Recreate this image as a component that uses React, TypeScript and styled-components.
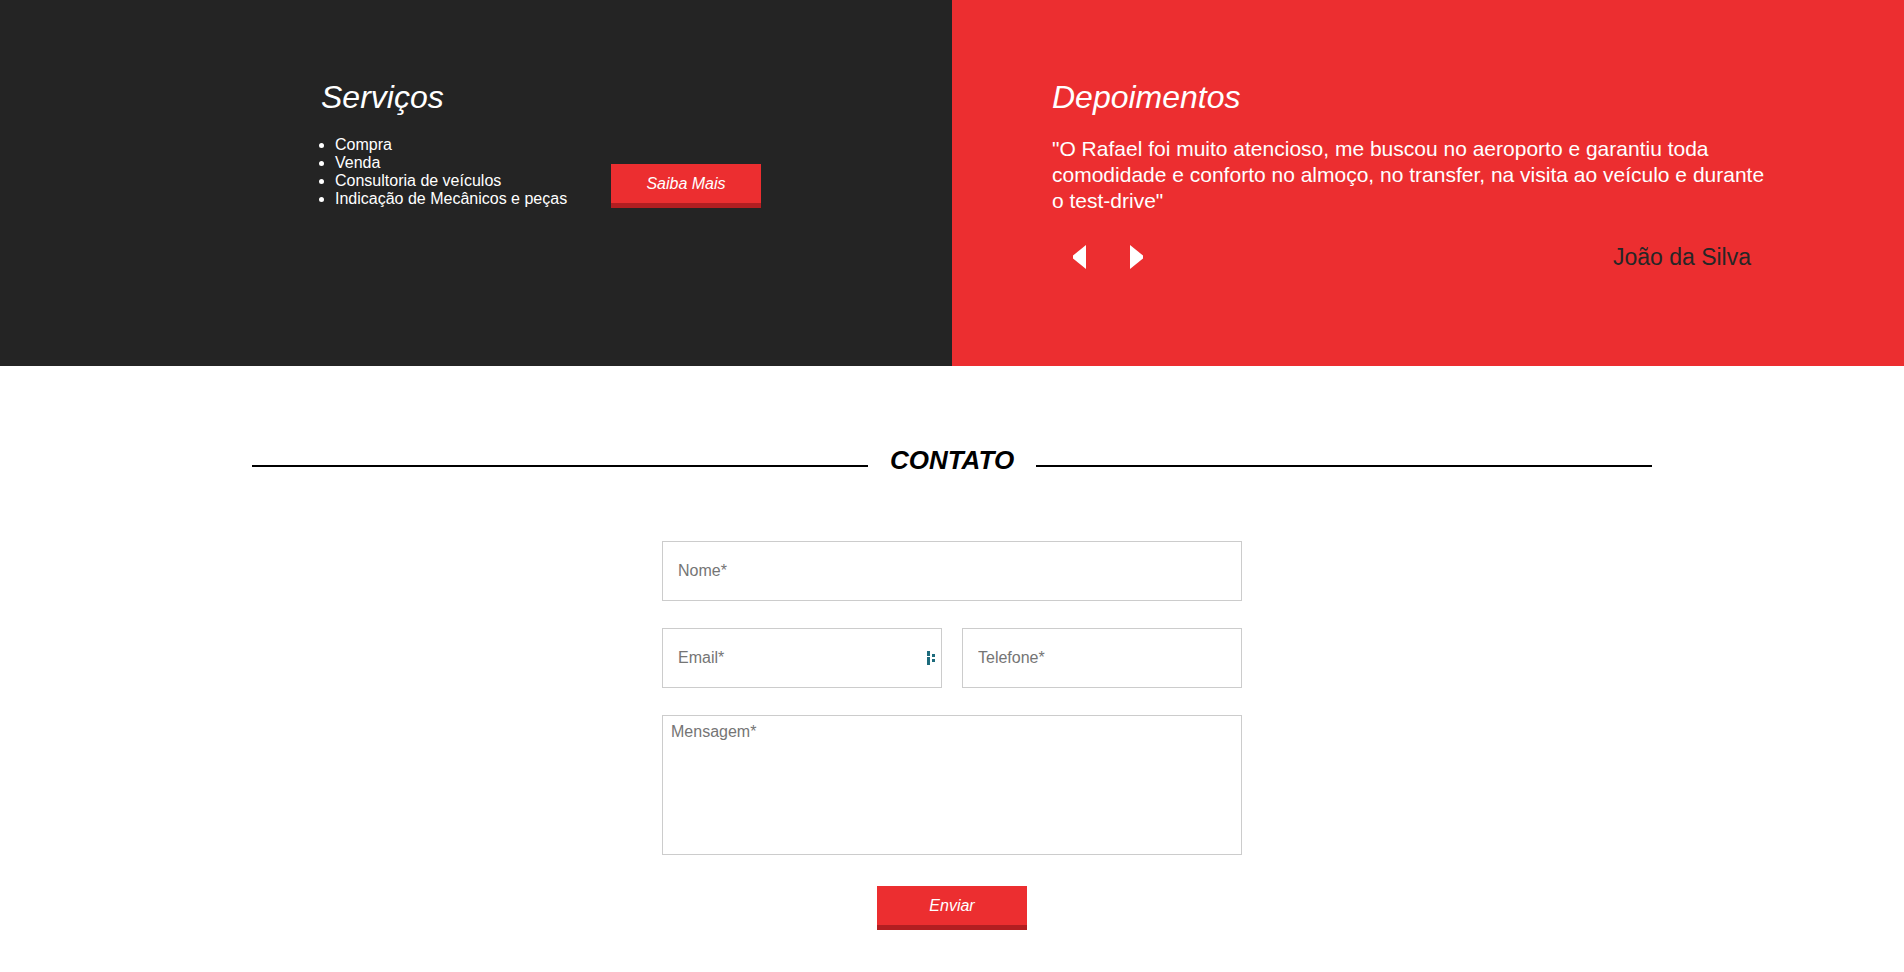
import styled, { createGlobalStyle } from 'styled-components';

const GlobalStyle = createGlobalStyle`
  * {
    box-sizing: border-box;
  }

  body {
    margin: 0;
    background: #ffffff;
    font-family: "Liberation Sans", Arial, sans-serif;
  }
`;

const RED = '#ec2e30';
const RED_DARK = '#b21e21';

const TopSection = styled.section`
  display: grid;
  grid-template-columns: 1fr 1fr;
  height: 366px;
`;

const ServicesColumn = styled.div`
  background: #242424;
  padding: 79px 0 0 321px;
`;

const TestimonialsColumn = styled.div`
  background: ${RED};
  padding: 79px 100px 0 100px;
`;

const SectionTitle = styled.h2`
  margin: 0;
  color: #ffffff;
  font-size: 32px;
  font-style: italic;
  font-weight: normal;
  line-height: 37px;
`;

const ServicesRow = styled.div`
  display: flex;
  align-items: flex-end;
  margin-top: 20px;
`;

const ServiceList = styled.ul`
  flex: none;
  width: 290px;
  margin: 0;
  padding-left: 14px;
  color: #ffffff;
  font-size: 16px;
  line-height: 18px;
  list-style: disc;
`;

const RedButton = styled.button`
  width: 150px;
  height: 44px;
  border: none;
  border-bottom: 5px solid ${RED_DARK};
  background: ${RED};
  color: #ffffff;
  font-family: "Liberation Sans", Arial, sans-serif;
  font-size: 16px;
  font-style: italic;
  cursor: pointer;
  padding: 0;
`;

const Quote = styled.p`
  max-width: 725px;
  margin: 20px 0 0;
  color: #ffffff;
  font-size: 21px;
  line-height: 26px;
`;

const TestimonialFooter = styled.div`
  display: flex;
  align-items: flex-start;
  margin-top: 31px;
  padding: 0 53px 0 20px;
`;

const Arrows = styled.div`
  display: flex;
  gap: 44px;
`;

const ArrowButton = styled.button`
  display: block;
  width: 14px;
  height: 24px;
  padding: 0;
  border: none;
  background: none;
  cursor: pointer;

  svg {
    display: block;
  }
`;

const Author = styled.span`
  margin-left: auto;
  color: #262626;
  font-size: 23px;
  line-height: 25px;
`;

const ContactSection = styled.section`
  padding: 79px 0 60px;
`;

const ContactTitleRow = styled.div`
  display: flex;
  align-items: center;
  gap: 22px;
  width: 1400px;
  margin: 0 auto;
`;

const TitleLine = styled.span`
  flex: 1;
  height: 2px;
  margin-top: 12px;
  background: #000000;
`;

const ContactTitle = styled.h2`
  margin: 0;
  color: #000000;
  font-size: 26px;
  font-style: italic;
  font-weight: bold;
  line-height: 30px;
`;

const Form = styled.form`
  display: flex;
  flex-direction: column;
  gap: 27px;
  width: 580px;
  margin: 66px auto 0;
`;

const FieldRow = styled.div`
  display: grid;
  grid-template-columns: 1fr 1fr;
  gap: 20px;
`;

const FieldWrap = styled.div`
  position: relative;
`;

const Input = styled.input`
  display: block;
  width: 100%;
  height: 60px;
  padding: 0 15px;
  border: 1px solid #cccccc;
  border-radius: 0;
  outline: none;
  font-family: "Liberation Sans", Arial, sans-serif;
  font-size: 16px;
  color: #333333;

  &::placeholder {
    color: #757575;
  }
`;

const TextArea = styled.textarea`
  display: block;
  width: 100%;
  height: 140px;
  padding: 7px 8px;
  border: 1px solid #cccccc;
  border-radius: 0;
  outline: none;
  resize: none;
  font-family: "Liberation Sans", Arial, sans-serif;
  font-size: 16px;
  color: #333333;

  &::placeholder {
    color: #757575;
  }
`;

const FieldBadge = styled.span`
  position: absolute;
  top: 23px;
  right: 5px;
  display: block;
  line-height: 0;
`;

const SubmitRow = styled.div`
  display: flex;
  justify-content: center;
  margin-top: 4px;
`;

function CaretLeft() {
  return (
    <svg width="14" height="24" viewBox="0 0 14 24" aria-hidden>
      <polygon points="14,0 14,24 1,13.5 1,10.5" fill="#ffffff" />
    </svg>
  );
}

function CaretRight() {
  return (
    <svg width="14" height="24" viewBox="0 0 14 24" aria-hidden>
      <polygon points="0,0 0,24 13,13.5 13,10.5" fill="#ffffff" />
    </svg>
  );
}

function FillerBadge() {
  return (
    <svg width="10" height="14" viewBox="0 0 10 14" aria-hidden>
      <rect x="0" y="0" width="3" height="5" fill="#1d6b7c" />
      <rect x="0" y="6" width="3" height="8" fill="#1d6b7c" />
      <rect x="5" y="3" width="3" height="3" fill="#1d6b7c" />
      <rect x="5" y="8" width="3" height="3" fill="#1d6b7c" />
    </svg>
  );
}

const services = [
  'Compra',
  'Venda',
  'Consultoria de veículos',
  'Indicação de Mecânicos e peças',
];

export default function App() {
  return (
    <>
      <GlobalStyle />
      <TopSection>
        <ServicesColumn>
          <SectionTitle>Serviços</SectionTitle>
          <ServicesRow>
            <ServiceList>
              {services.map((item) => (
                <li key={item}>{item}</li>
              ))}
            </ServiceList>
            <RedButton type="button">Saiba Mais</RedButton>
          </ServicesRow>
        </ServicesColumn>

        <TestimonialsColumn>
          <SectionTitle>Depoimentos</SectionTitle>
          <Quote>
            "O Rafael foi muito atencioso, me buscou no aeroporto e garantiu toda
            comodidade e conforto no almoço, no transfer, na visita ao veículo e
            durante o test-drive"
          </Quote>
          <TestimonialFooter>
            <Arrows>
              <ArrowButton type="button" aria-label="Anterior">
                <CaretLeft />
              </ArrowButton>
              <ArrowButton type="button" aria-label="Próximo">
                <CaretRight />
              </ArrowButton>
            </Arrows>
            <Author>João da Silva</Author>
          </TestimonialFooter>
        </TestimonialsColumn>
      </TopSection>

      <ContactSection>
        <ContactTitleRow>
          <TitleLine />
          <ContactTitle>CONTATO</ContactTitle>
          <TitleLine />
        </ContactTitleRow>

        <Form onSubmit={(e) => e.preventDefault()}>
          <Input type="text" placeholder="Nome*" />
          <FieldRow>
            <FieldWrap>
              <Input type="email" placeholder="Email*" />
              <FieldBadge>
                <FillerBadge />
              </FieldBadge>
            </FieldWrap>
            <Input type="tel" placeholder="Telefone*" />
          </FieldRow>
          <TextArea placeholder="Mensagem*" />
          <SubmitRow>
            <RedButton type="submit">Enviar</RedButton>
          </SubmitRow>
        </Form>
      </ContactSection>
    </>
  );
}
